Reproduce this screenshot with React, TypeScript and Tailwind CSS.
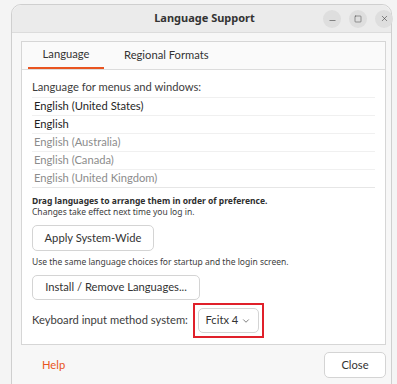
import { ChevronDown, Minus, Square, X } from 'lucide-react'

const langs = [
  { name: 'English (United States)', active: true },
  { name: 'English', active: true },
  { name: 'English (Australia)', active: false },
  { name: 'English (Canada)', active: false },
  { name: 'English (United Kingdom)', active: false },
]

const ui = "font-['Lato',sans-serif] text-[11.2px]"

export default function App() {
  return (
    <div className="w-[397px] h-[384px] overflow-hidden bg-[#f4f4f4] flex font-['Noto_Sans',sans-serif] text-[#3d3d3d]">
      {/* window */}
      <div className="ml-[11px] mt-[4px] w-[381px] h-[390px] rounded-t-[10px] border border-[#cfcfcf] bg-[#f7f7f7] flex flex-col">
        {/* title bar */}
        <div className="h-[28px] shrink-0 rounded-t-[10px] bg-[#ebebeb] border-b border-[#dcdcdc] flex items-center">
          <div className="flex-1 text-center text-[11px] font-bold text-[#333] pl-[74px]">Language Support</div>
          <div className="flex gap-[8px] mr-[-2px]">
            <button className="w-[18px] h-[18px] rounded-full bg-[#dedede] flex items-center justify-center">
              <Minus size={9} strokeWidth={1.5} className="mt-[3px]" />
            </button>
            <button className="w-[18px] h-[18px] rounded-full bg-[#dedede] flex items-center justify-center">
              <Square size={8} strokeWidth={1.5} />
            </button>
            <button className="w-[18px] h-[18px] rounded-full bg-[#dedede] flex items-center justify-center">
              <X size={9} strokeWidth={1.5} />
            </button>
          </div>
        </div>

        {/* notebook */}
        <div className="ml-[9px] mr-[5px] mt-[8px] h-[304px] border border-[#d6d6d6] bg-white flex flex-col">
          <div className={`h-[28px] shrink-0 flex border-b border-[#dcdcdc] bg-[#fafafa] ${ui}`}>
            <div className="ml-[6px] w-[76px] flex items-center justify-center border-b-[2px] border-[#e95420] text-[#333]">Language</div>
            <div className="ml-[12px] px-[8px] flex items-center text-[#333]">Regional Formats</div>
          </div>

          <div className="px-[10px] pt-[9px] flex flex-col">
            <div className={`${ui} leading-[15px] text-[#3d3d3d]`}>Language for menus and windows:</div>
            <div className="mt-[3px] border-b border-[#e6e6e6]">
              {langs.map((l) => (
                <div
                  key={l.name}
                  className={`h-[18px] flex items-center px-[2px] border-t border-[#f0f0f0] ${ui} ${l.active ? 'text-[#1f1f1f]' : 'text-[#8c8c8c]'}`}
                >
                  {l.name}
                </div>
              ))}
            </div>

            <div className="mt-[7px] text-[8.5px] leading-[11px] font-bold text-[#2e2e2e]">Drag languages to arrange them in order of preference.</div>
            <div className="text-[8.5px] leading-[11px] text-[#3d3d3d]">Changes take effect next time you log in.</div>

            <button className={`mt-[8px] w-[122px] h-[26px] rounded-[5px] border border-[#d4d4d4] bg-white ${ui} text-[#333]`}>Apply System-Wide</button>
            <div className="mt-[5px] text-[8.5px] leading-[11px] text-[#3d3d3d]">Use the same language choices for startup and the login screen.</div>
            <button className={`mt-[8px] w-[168px] h-[25px] rounded-[5px] border border-[#d4d4d4] bg-white ${ui} text-[#333]`}>Install / Remove Languages...</button>

            <div className="mt-[3px] flex items-center">
              <span className={`${ui} text-[#3d3d3d] mr-[5px]`}>Keyboard input method system:</span>
              <div className="w-[71px] h-[35px] border-[2px] border-[#e0202a] flex items-center justify-center">
                <div className={`w-[61px] h-[25px] rounded-[5px] border border-[#d4d4d4] bg-white flex items-center justify-center gap-[3px] ${ui} text-[#333]`}>
                  Fcitx 4
                  <ChevronDown size={10} strokeWidth={1.5} />
                </div>
              </div>
            </div>
          </div>
        </div>

        {/* footer */}
        <div className="ml-[9px] mr-[5px] mt-[7px] flex items-center justify-between">
          <span className={`ml-[21px] ${ui} text-[#e95420]`}>Help</span>
          <button className={`w-[62px] h-[26px] rounded-[5px] border border-[#d4d4d4] bg-white ${ui} text-[#333]`}>Close</button>
        </div>
      </div>
    </div>
  )
}
